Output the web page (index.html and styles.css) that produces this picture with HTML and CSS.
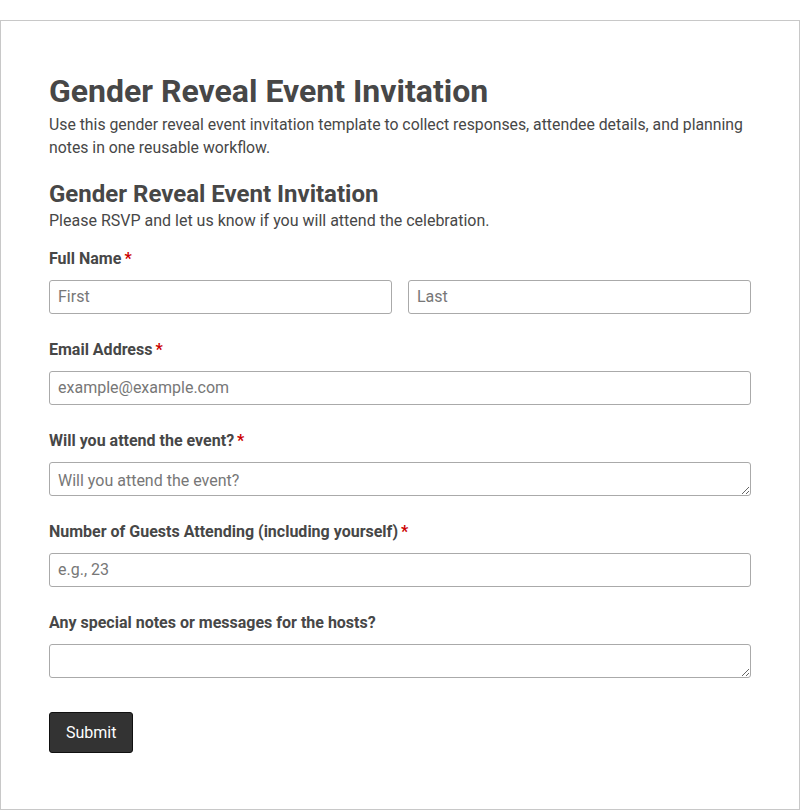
FILE: index.html
```html
<!DOCTYPE html>
<html lang="en">
    <head>
        <meta charset="UTF-8">
        <title>Gender Reveal Event Invitation</title>
        <link rel="stylesheet" href="styles.css">
    </head>
    <body>
    <div id="id-div-container">
        <h1 class="page-title">Gender Reveal Event Invitation</h1>
        <p class="page-desc">Use this gender reveal event invitation template to collect responses, attendee details, and planning notes in one reusable workflow.</p>
        <form class="rsvp-form">
            <h2 class="form-title">Gender Reveal Event Invitation</h2>
            <p class="form-desc">Please RSVP and let us know if you will attend the celebration.</p>
            <div class="field">
                <label class="field-label">Full Name<span class="req">*</span></label>
                <div class="field-row">
                    <input type="text" placeholder="First">
                    <input type="text" placeholder="Last">
                </div>
            </div>
            <div class="field">
                <label class="field-label">Email Address<span class="req">*</span></label>
                <input type="email" placeholder="example@example.com">
            </div>
            <div class="field">
                <label class="field-label">Will you attend the event?<span class="req">*</span></label>
                <textarea placeholder="Will you attend the event?"></textarea>
            </div>
            <div class="field">
                <label class="field-label">Number of Guests Attending (including yourself)<span class="req">*</span></label>
                <input type="text" placeholder="e.g., 23">
            </div>
            <div class="field">
                <label class="field-label">Any special notes or messages for the hosts?</label>
                <textarea></textarea>
            </div>
            <button type="button" class="btn-submit">Submit</button>
        </form>
    </div>
    </body>
</html>
```
FILE: styles.css
```css
body {
    margin: 0;
    padding-top: 20px;
    font-family: Roboto, "Liberation Sans", Arial, sans-serif;
    color: #474747;
    background: #fff;
}
#id-div-container {
    height: 790px;
    box-sizing: border-box;
    border: 1px solid #c8c8c8;
    padding: 51px 48px 0;
}
.page-title {
    margin: 0;
    font-size: 32px;
    line-height: 38px;
    font-weight: 700;
}
.page-desc {
    margin: 3px 0 0;
    font-size: 15.8px;
    line-height: 23px;
}
.form-title {
    margin: 20px 0 0;
    font-size: 24px;
    line-height: 30px;
    font-weight: 700;
}
.form-desc {
    margin: 0 0 16px;
    font-size: 16px;
    line-height: 23px;
}
.field {
    margin-bottom: 25px;
}
.field-label {
    display: block;
    font-size: 16px;
    line-height: 22px;
    font-weight: 700;
    margin-bottom: 10px;
}
.req {
    color: #c00;
    margin-left: 3px;
}
.field-row {
    display: flex;
    gap: 16px;
}
.field input,
.field textarea {
    display: block;
    width: 100%;
    height: 34px;
    box-sizing: border-box;
    border: 1px solid #aaa;
    border-radius: 3px;
    padding: 5px 8px 7px;
    font: 16px Roboto, "Liberation Sans", Arial, sans-serif;
    color: #444;
    margin: 0;
}
.field textarea {
    resize: vertical;
    line-height: 20px;
    padding: 8px 8px 4px;
}
.field input::placeholder,
.field textarea::placeholder {
    color: #777;
}
.btn-submit {
    margin-top: 9px;
    height: 41px;
    padding: 0 16px;
    background-color: #333;
    color: #fff;
    border: 1px solid #111;
    border-radius: 3px;
    font: 16px Roboto, "Liberation Sans", Arial, sans-serif;
}
```
